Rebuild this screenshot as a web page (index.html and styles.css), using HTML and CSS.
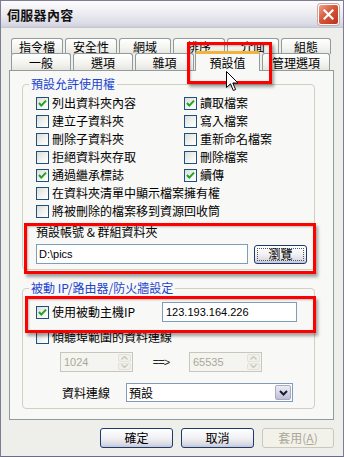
FILE: index.html
```html
<!DOCTYPE html>
<html lang="zh-Hant">
  <head>
    <meta charset="UTF-8" />
    <meta name="viewport" content="width=device-width, initial-scale=1.0" />
    <title>伺服器內容</title>
    <link rel="stylesheet" href="styles.css">
  </head>
  <body>
    <div class="window">
      <!-- Title bar -->
      <div class="titlebar">
        <span class="title">伺服器內容</span>
        <span class="close">
          <svg width="11" height="11" viewBox="0 0 11 11">
            <path d="M1.5 1.5 L9.5 9.5 M9.5 1.5 L1.5 9.5" stroke="#fff" stroke-width="2.2" stroke-linecap="square" />
          </svg>
        </span>
      </div>

      <div class="client">
        <!-- Tabs -->
        <div class="tabs">
          <div class="tab-row top-row">
            <span class="tab">指令檔</span>
            <span class="tab">安全性</span>
            <span class="tab">網域</span>
            <span class="tab">排序</span>
            <span class="tab">介面</span>
            <span class="tab last">組態</span>
          </div>
          <div class="tab-row bottom-row">
            <span class="tab w60">一般</span>
            <span class="tab w60">選項</span>
            <span class="tab w59">雜項</span>
            <span class="tab active">預設值</span>
            <span class="tab w68">管理選項</span>
          </div>
        </div>

        <!-- Tab page -->
        <div class="panel">
          <fieldset class="group perms">
            <legend>預設允許使用權</legend>
            <div class="check-grid">
              <label class="check"><span class="box on"><svg viewBox="0 0 11 11"><path d="M2 5 L4.3 7.6 L9 2.6" /></svg></span>列出資料夾內容</label>
              <label class="check"><span class="box on"><svg viewBox="0 0 11 11"><path d="M2 5 L4.3 7.6 L9 2.6" /></svg></span>讀取檔案</label>
              <label class="check"><span class="box"></span>建立子資料夾</label>
              <label class="check"><span class="box"></span>寫入檔案</label>
              <label class="check"><span class="box"></span>刪除子資料夾</label>
              <label class="check"><span class="box"></span>重新命名檔案</label>
              <label class="check"><span class="box"></span>拒絕資料夾存取</label>
              <label class="check"><span class="box"></span>刪除檔案</label>
              <label class="check"><span class="box on"><svg viewBox="0 0 11 11"><path d="M2 5 L4.3 7.6 L9 2.6" /></svg></span>通過繼承標誌</label>
              <label class="check"><span class="box on"><svg viewBox="0 0 11 11"><path d="M2 5 L4.3 7.6 L9 2.6" /></svg></span>續傳</label>
              <label class="check wide"><span class="box"></span>在資料夾清單中顯示檔案擁有權</label>
              <label class="check wide"><span class="box"></span>將被刪除的檔案移到資源回收筒</label>
            </div>

            <div class="folder">
              <div class="folder-label">預設帳號 &amp; 群組資料夾</div>
              <div class="folder-row">
                <span class="textbox folder-path">D:\pics</span>
                <span class="btn browse"><span class="focus-ring">瀏覽</span></span>
              </div>
            </div>
          </fieldset>

          <fieldset class="group passive">
            <legend>被動 IP/路由器/防火牆設定</legend>
            <div class="ip-row">
              <label class="check ip-check"><span class="box on"><svg viewBox="0 0 11 11"><path d="M2 5 L4.3 7.6 L9 2.6" /></svg></span>使用被動主機IP</label>
              <span class="textbox ip-input">123.193.164.226</span>
            </div>
            <label class="check port-check"><span class="box"></span>傾聽埠範圍的資料連線</label>
            <div class="port-row">
              <div class="spin">
                <span class="spin-val">1024</span>
                <span class="spin-btns">
                  <span class="spin-btn"><svg width="7" height="4" viewBox="0 0 7 4"><path d="M0.5 3.5 L3.5 0.5 L6.5 3.5" /></svg></span>
                  <span class="spin-btn"><svg width="7" height="4" viewBox="0 0 7 4"><path d="M0.5 0.5 L3.5 3.5 L6.5 0.5" /></svg></span>
                </span>
              </div>
              <span class="arrow-text">==&gt;</span>
              <div class="spin">
                <span class="spin-val">65535</span>
                <span class="spin-btns">
                  <span class="spin-btn"><svg width="7" height="4" viewBox="0 0 7 4"><path d="M0.5 3.5 L3.5 0.5 L6.5 3.5" /></svg></span>
                  <span class="spin-btn"><svg width="7" height="4" viewBox="0 0 7 4"><path d="M0.5 0.5 L3.5 3.5 L6.5 0.5" /></svg></span>
                </span>
              </div>
            </div>
            <div class="conn-row">
              <span class="conn-label">資料連線</span>
              <div class="select">
                <span class="select-val">預設</span>
                <span class="select-btn">
                  <svg width="9" height="6" viewBox="0 0 9 6"><path d="M1 1 L4.5 4.5 L8 1" /></svg>
                </span>
              </div>
            </div>
          </fieldset>
        </div>

        <!-- Dialog buttons -->
        <div class="buttons">
          <span class="btn dlg">確定</span>
          <span class="btn dlg">取消</span>
          <span class="btn dlg disabled">套用(<u>A</u>)</span>
        </div>
      </div>

      <!-- Red highlight marks and mouse pointer drawn over the dialog -->
      <div class="mark mark-tab"></div>
      <div class="mark mark-folder"></div>
      <div class="mark mark-ip"></div>
      <svg class="cursor" width="13" height="21" viewBox="0 0 13 21">
        <path d="M0.5 0.5 L0.5 16.5 L4.5 12.8 L7.3 19.5 L9.6 18.5 L6.8 12 L12 12 Z" fill="#fff" stroke="#000" stroke-width="1" stroke-linejoin="round" />
      </svg>
    </div>
  </body>
</html>
```

FILE: styles.css
```css
* {
  box-sizing: border-box;
}

body {
  margin: 0;
  background: #fff;
  font-family: "Noto Sans CJK TC", "Liberation Sans", sans-serif;
  font-size: 12px;
  color: #000;
}

.window {
  position: relative;
  width: 344px;
  height: 457px;
  border: 1px solid #7c7c94;
  border-bottom-color: #6c6c84;
  background: #eeeeea;
  overflow: hidden;
}

/* Title bar */

.titlebar {
  height: 27px;
  display: flex;
  align-items: center;
  justify-content: space-between;
  padding: 0 4px 0 6px;
  background: linear-gradient(#fdfdfe, #ededf2 45%, #dcdce6 85%, #cfcfdb);
  border-bottom: 1px solid #c4c4d2;
}

.title {
  font-size: 13px;
  font-weight: bold;
  line-height: 15px;
  letter-spacing: 0.3px;
  color: #111;
}

.close {
  width: 21px;
  height: 21px;
  display: flex;
  align-items: center;
  justify-content: center;
  border: 1px solid #fff;
  border-radius: 3px;
  background: linear-gradient(135deg, #f0a08a, #d8573a 45%, #b8321a);
  box-shadow: 0 0 0 1px #c8a8a0;
}

/* Client area */

.client {
  padding: 10px 9px 0 8px;
}

.tabs {
  height: 32px;
}

.tab-row {
  display: flex;
  gap: 2px;
  padding-left: 2px;
}

.top-row {
  height: 15px;
}

.bottom-row {
  height: 17px;
}

.tab {
  width: 52px;
  display: flex;
  align-items: center;
  justify-content: center;
  border: 1px solid #919b9c;
  border-bottom: none;
  border-radius: 3px 3px 0 0;
  background: linear-gradient(#ffffff, #f3f3ef 60%, #e6e5e0);
  line-height: 14px;
}

.top-row .tab {
  height: 16px;
}

.bottom-row .tab {
  height: 17px;
  padding-top: 1px;
}

.tab.last {
  width: 50px;
}

.tab.w60 {
  width: 60px;
}

.tab.w59 {
  width: 59px;
}

.tab.w68 {
  width: 68px;
}

.bottom-row .tab.active {
  position: relative;
  z-index: 2;
  width: 65px;
  height: 20px;
  margin: -2px 0 0 -1px;
  padding-top: 0;
  border-top: 3px solid #f1b33b;
  background: #f8f8f6;
}

/* Tab page */

.panel {
  position: relative;
  z-index: 1;
  height: 350px;
  border: 1px solid #919b9c;
  background: #f8f8f6;
  padding-top: 6px;
}

.group {
  margin: 0 0 0 12px;
  width: 293px;
  min-width: 0;
  padding: 0;
  border: 1px solid #d0d0bf;
  border-radius: 4px;
}

.group legend {
  margin-left: 6px;
  padding: 0 2px;
  line-height: 14px;
  color: #1a45d0;
}

.perms {
  padding-bottom: 5px;
}

.check-grid {
  display: grid;
  grid-template-columns: 148px 1fr;
  padding: 3px 0 0 13px;
}

.check {
  display: flex;
  align-items: center;
  gap: 3px;
  height: 18px;
  line-height: 14px;
  white-space: nowrap;
}

.check.wide {
  grid-column: 1 / 3;
}

.box {
  width: 13px;
  height: 13px;
  flex: none;
  border: 1px solid #1c5180;
  background: linear-gradient(135deg, #dcdcd7, #f4f4f2 60%, #ffffff);
}

.box svg {
  display: block;
  width: 11px;
  height: 11px;
}

.box svg path {
  fill: none;
  stroke: #21a121;
  stroke-width: 2;
}

.folder {
  padding-left: 13px;
}

.folder-label {
  margin-top: 5px;
  line-height: 14px;
}

.folder-row {
  display: flex;
  align-items: center;
  margin-top: 5px;
}

.textbox {
  height: 20px;
  display: flex;
  align-items: center;
  padding-left: 2px;
  border: 1px solid #7f9db9;
  background: #fff;
  font-family: "Liberation Sans", sans-serif;
  font-size: 11px;
}

.folder-path {
  width: 212px;
}

.btn {
  display: flex;
  align-items: center;
  justify-content: center;
  border: 1px solid #1c3a6e;
  border-radius: 3px;
  background: linear-gradient(#ffffff, #f1f1f4 50%, #dadae4 85%, #c6c6d4);
  line-height: 14px;
}

.browse {
  width: 53px;
  height: 19px;
  margin-left: 6px;
  padding: 2px;
}

.focus-ring {
  flex: 1;
  align-self: stretch;
  display: flex;
  align-items: center;
  justify-content: center;
  border: 1px dotted #555;
}

/* Passive IP group */

.passive {
  margin-top: 11px;
  padding-bottom: 6px;
}

.ip-row {
  display: flex;
  align-items: center;
  margin-top: 7px;
  padding-left: 13px;
}

.ip-check {
  width: 126px;
}

.ip-input {
  width: 135px;
  padding-left: 3px;
}

.port-check {
  margin-top: 6px;
  padding-left: 13px;
}

.port-row {
  display: flex;
  align-items: center;
  margin-top: 6px;
  padding-left: 37px;
}

.spin {
  width: 73px;
  height: 20px;
  display: flex;
  border: 1px solid #c9c7ba;
  background: #f4f4f0;
}

.spin-val {
  flex: 1;
  padding-left: 3px;
  display: flex;
  align-items: center;
  font-family: "Liberation Sans", sans-serif;
  font-size: 11px;
  color: #aca899;
}

.spin-btns {
  width: 15px;
  display: flex;
  flex-direction: column;
  padding: 1px;
  gap: 1px;
}

.spin-btn {
  flex: 1;
  display: flex;
  align-items: center;
  justify-content: center;
  border: 1px solid #e2e1da;
  border-radius: 2px;
  background: #f0f0ec;
}

.spin-btn svg path {
  fill: none;
  stroke: #c9c7ba;
  stroke-width: 1.4;
}

.arrow-text {
  width: 56px;
  text-align: center;
  font-family: "Liberation Sans", sans-serif;
  font-size: 11px;
  letter-spacing: -1px;
  color: #222;
}

.conn-row {
  display: flex;
  align-items: center;
  margin-top: 11px;
  padding-left: 39px;
}

.conn-label {
  width: 64px;
  line-height: 14px;
}

.select {
  width: 167px;
  height: 19px;
  display: flex;
  align-items: center;
  justify-content: space-between;
  padding: 0 1px 0 2px;
  border: 1px solid #7f9db9;
  background: #fff;
}

.select-val {
  line-height: 14px;
}

.select-btn {
  width: 16px;
  height: 15px;
  display: flex;
  align-items: center;
  justify-content: center;
  border: 1px solid #a9a9c4;
  border-radius: 2px;
  background: linear-gradient(#ececf6, #d2d2e4 60%, #bcbcd4);
}

.select-btn svg path {
  fill: none;
  stroke: #1b1b33;
  stroke-width: 2;
}

/* Dialog buttons */

.buttons {
  display: flex;
  justify-content: flex-end;
  gap: 8px;
  margin-top: 8px;
}

.btn.dlg {
  width: 73px;
  height: 20px;
}

.btn.dlg.disabled {
  width: 72px;
  border-color: #cac8bb;
  background: #f2f1ea;
  color: #aca899;
}

/* Highlight marks */

.mark {
  position: absolute;
  z-index: 5;
  border: 3px solid #f00;
  box-shadow: 2px 3px 3px rgba(0, 0, 0, 0.35), inset 1px 1px 2px rgba(0, 0, 0, 0.25);
}

.mark-tab {
  left: 186px;
  top: 41px;
  width: 85px;
  height: 42px;
}

.mark-folder {
  left: 23px;
  top: 222px;
  width: 292px;
  height: 51px;
}

.mark-ip {
  left: 24px;
  top: 295px;
  width: 291px;
  height: 37px;
}

.cursor {
  position: absolute;
  z-index: 6;
  left: 225px;
  top: 70px;
}
```
